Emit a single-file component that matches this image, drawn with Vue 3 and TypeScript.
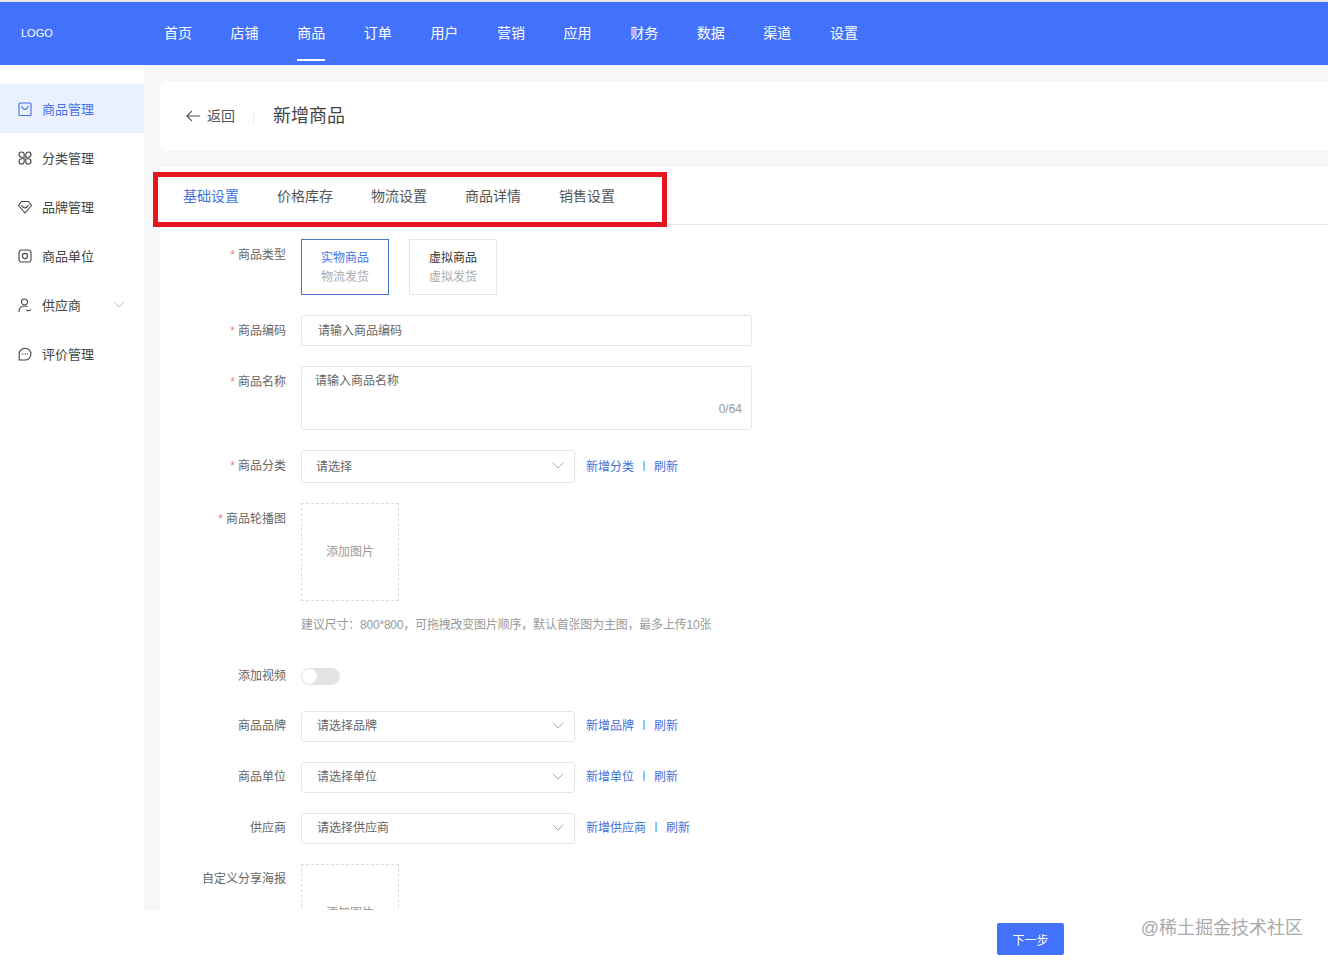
<script setup lang="ts">
interface SideItem { name: string; paths: string[]; active?: boolean; arrow?: boolean }
const navs: string[] = ['首页', '店铺', '商品', '订单', '用户', '营销', '应用', '财务', '数据', '渠道', '设置']
const tabs: string[] = ['基础设置', '价格库存', '物流设置', '商品详情', '销售设置']
const sideItems: SideItem[] = [
  { name: '商品管理', active: true, paths: ['M2 1h10a1 1 0 0 1 1 1v10.500a1 1 0 0 1-1 1H2a1 1 0 0 1-1-1V2a1 1 0 0 1 1-1z', 'M3.800 4.200c.7 2.200 1.700 3.300 3.200 3.300s2.500-1.100 3.200-3.300'] },
  { name: '分类管理', paths: ['M3.600 1a2.600 2.600 0 0 1 2.600 2.600v2.600H3.600a2.600 2.600 0 0 1 0-5.200z', 'M10.400 1a2.600 2.600 0 0 0-2.600 2.600v2.600h2.600a2.600 2.600 0 0 0 0-5.200z', 'M3.600 13a2.600 2.600 0 0 0 2.600-2.600V7.800H3.600a2.600 2.600 0 0 0 0 5.200z', 'M10.400 13a2.600 2.600 0 0 1-2.600-2.600V7.800h2.600a2.600 2.600 0 0 1 0 5.200z'] },
  { name: '品牌管理', paths: ['M3.500 1.500h7L13.500 5.500 7 13 .5 5.500z', 'M3.800 5.200c.8 1.800 1.900 2.800 3.200 2.800s2.400-1 3.200-2.800'] },
  { name: '商品单位', paths: ['M3.500 1h7A2.500 2.500 0 0 1 13 3.500v7a2.500 2.500 0 0 1-2.500 2.500h-7A2.500 2.500 0 0 1 1 10.500v-7A2.500 2.500 0 0 1 3.500 1z', 'M7 4.400a2.600 2.600 0 1 1 0 5.200 2.600 2.600 0 0 1 0-5.200z'] },
  { name: '供应商', arrow: true, paths: ['M6.500 1a3 3 0 1 1 0 6 3 3 0 0 1 0-6z', 'M1 13.500c0-3.300 2.200-5.500 5.500-5.500 1 0 1.900.2 2.600.6', 'M8.500 12.200c1 .9 2.900.9 4-.4'] },
  { name: '评价管理', paths: ['M7 1.200a5.900 5.900 0 0 1 0 11.800H1.200V7A5.800 5.800 0 0 1 7 1.200z', 'M4.300 7h.5M6.800 7h.5M9.300 7h.5'] },
]
const brandRows = [
  { label: '商品品牌', placeholder: '请选择品牌', add: '新增品牌' },
  { label: '商品单位', placeholder: '请选择单位', add: '新增单位' },
  { label: '供应商', placeholder: '请选择供应商', add: '新增供应商' },
]
</script>

<template>
  <div class="page">
    <header class="topbar">
      <div class="logo">LOGO</div>
      <nav class="nav">
        <a v-for="n in navs" :key="n" class="nav-item" :class="{ on: n === '商品' }">{{ n }}</a>
      </nav>
    </header>

    <div class="middle">
      <aside class="side">
        <div v-for="s in sideItems" :key="s.name" class="side-item" :class="{ active: s.active }">
          <svg class="side-icon" viewBox="0 0 14 14" fill="none" stroke="currentColor" stroke-width="1.100" stroke-linejoin="round" stroke-linecap="round">
            <path v-for="d in s.paths" :key="d" :d="d" />
          </svg>
          <span class="side-text">{{ s.name }}</span>
          <svg v-if="s.arrow" class="side-arrow" viewBox="0 0 10 6" fill="none" stroke="#bbb" stroke-width="1">
            <path d="M.5.5 5 5 9.500.5" />
          </svg>
        </div>
      </aside>

      <main class="main">
        <section class="title-card">
          <svg class="back-icon" viewBox="0 0 14 12" fill="none" stroke="#555" stroke-width="1.200">
            <path d="M6 .8.9 6 6 11.200M1 6h13" />
          </svg>
          <span class="back-text">返回</span>
          <i class="title-divider"></i>
          <h1 class="title">新增商品</h1>
        </section>

        <section class="form-card">
          <div class="tabs">
            <span v-for="(t, i) in tabs" :key="t" class="tab" :class="{ on: i === 0 }">{{ t }}</span>
          </div>

          <form class="form">
            <div class="row">
              <label class="label"><em>*</em>商品类型</label>
              <div class="type-group">
                <div class="type-card selected"><b>实物商品</b><span>物流发货</span></div>
                <div class="type-card"><b>虚拟商品</b><span>虚拟发货</span></div>
              </div>
            </div>

            <div class="row">
              <label class="label"><em>*</em>商品编码</label>
              <div class="input">请输入商品编码</div>
            </div>

            <div class="row">
              <label class="label"><em>*</em>商品名称</label>
              <div class="textarea">
                <span>请输入商品名称</span>
                <span class="count">0/64</span>
              </div>
            </div>

            <div class="row">
              <label class="label"><em>*</em>商品分类</label>
              <div class="select tall">
                <span>请选择</span>
                <svg class="chev" viewBox="0 0 12 7" fill="none" stroke="#aaa" stroke-width="1"><path d="M.7.7 6 6 11.300.7" /></svg>
              </div>
              <div class="links"><a>新增分类</a><i>|</i><a>刷新</a></div>
            </div>

            <div class="row">
              <label class="label"><em>*</em>商品轮播图</label>
              <div>
                <div class="upload">添加图片</div>
                <p class="hint">建议尺寸&#xFF1A;800*800&#xFF0C;可拖拽改变图片顺序&#xFF0C;默认首张图为主图&#xFF0C;最多上传10张</p>
              </div>
            </div>

            <div class="row switch-row">
              <label class="label">添加视频</label>
              <div class="switch"><i></i></div>
            </div>

            <div v-for="r in brandRows" :key="r.label" class="row brand-row">
              <label class="label">{{ r.label }}</label>
              <div class="select">
                <span>{{ r.placeholder }}</span>
                <svg class="chev" viewBox="0 0 12 7" fill="none" stroke="#aaa" stroke-width="1"><path d="M.7.7 6 6 11.300.7" /></svg>
              </div>
              <div class="links"><a>{{ r.add }}</a><i>|</i><a>刷新</a></div>
            </div>

            <div class="row brand-row">
              <label class="label">自定义分享海报</label>
              <div class="upload">添加图片</div>
            </div>
          </form>
        </section>

        <div class="annotation"></div>
      </main>
    </div>

    <footer class="footer">
      <button class="next" type="button">下一步</button>
      <span class="watermark">@稀土掘金技术社区</span>
    </footer>
  </div>
</template>

<style>
html, body { margin: 0; background: #fff; }
</style>

<style scoped>
.page {
  position: relative;
  width: 1328px;
  height: 963px;
  display: flex;
  flex-direction: column;
  overflow: hidden;
  background: #fff;
  font-family: "Liberation Sans", "Noto Sans CJK SC", sans-serif;
  font-size: 12px;
  color: #666;
}
.topbar {
  flex: none;
  height: 63px;
  border-top: 2px solid #e6e7ec;
  background: #4272fb;
  display: flex;
  align-items: center;
  color: #fff;
}
.logo { width: 164px; padding: 0 0 1px 21px; box-sizing: border-box; font-size: 11px; }
.nav { display: flex; gap: 38.6px; height: 100%; }
.nav-item {
  position: relative;
  display: flex;
  align-items: center;
  width: 28px;
  padding-bottom: 3px;
  box-sizing: border-box;
  font-size: 14px;
}
.nav-item.on::after {
  content: "";
  position: absolute;
  left: 0;
  right: 0;
  bottom: 4px;
  height: 2px;
  background: #fff;
}
.middle { flex: 1; min-height: 0; display: flex; }
.side { flex: none; width: 144px; padding-top: 19px; box-sizing: border-box; background: #fff; }
.side-item {
  height: 49px;
  display: flex;
  align-items: center;
  padding-left: 18px;
  color: #444;
  font-size: 13px;
}
.side-item.active { background: #ebf0fe; color: #4272e6; }
.side-icon { width: 14px; height: 14px; flex: none; }
.side-text { margin-left: 10px; }
.side-arrow { width: 10px; height: 6px; margin-left: 33px; }
.main {
  position: relative;
  flex: 1;
  min-width: 0;
  display: flex;
  flex-direction: column;
  gap: 16px;
  padding: 16px 0 0 16px;
  background: #f5f7f8;
}
.title-card {
  flex: none;
  height: 70px;
  box-sizing: border-box;
  display: flex;
  align-items: center;
  padding-left: 26px;
  background: #fff;
  border-radius: 6px 0 0 6px;
}
.back-icon { width: 14px; height: 12px; }
.back-text { margin: -2px 0 0 7px; font-size: 14px; color: #555; }
.title-divider { width: 1px; height: 15px; margin: 0 19px 0 18px; background: #eee; }
.title { margin: -4px 0 0; font-size: 18px; font-weight: 400; color: #444; }
.form-card { flex: 1; min-height: 0; overflow: hidden; background: #fff; }
.tabs {
  height: 58px;
  box-sizing: border-box;
  display: flex;
  align-items: center;
  gap: 38px;
  padding: 0 0 2px 23px;
  border-bottom: 1px solid #e8e8e8;
}
.tab { font-size: 14px; color: #555; }
.tab.on { color: #4272e6; }
.form { padding-top: 14px; }
.row { display: flex; align-items: flex-start; margin-bottom: 20px; }
.label {
  flex: none;
  width: 125px;
  margin-right: 15px;
  padding: 1px 0 0 1px;
  line-height: 30px;
  text-align: right;
  color: #666;
}
.brand-row .label { padding-top: 0; padding-bottom: 1px; }
.label em { margin-right: 3px; font-style: normal; color: #ef7f8c; }
.type-group { display: flex; gap: 20px; }
.type-card {
  width: 88px;
  height: 56px;
  box-sizing: border-box;
  display: flex;
  flex-direction: column;
  align-items: center;
  justify-content: center;
  padding-top: 2px;
  border: 1px solid #e6e6e6;
  line-height: 19px;
}
.type-card b { font-weight: 400; color: #333; }
.type-card span { color: #aaa; }
.type-card.selected { border-color: #4a74c9; }
.type-card.selected b { color: #4272e6; }
.input {
  width: 451px;
  height: 31px;
  box-sizing: border-box;
  padding-left: 16px;
  line-height: 31px;
  border: 1px solid #e6e6e6;
  border-radius: 3px;
  color: #666;
}
.textarea {
  position: relative;
  width: 451px;
  height: 64px;
  box-sizing: border-box;
  padding: 4px 13px;
  line-height: 20px;
  border: 1px solid #e6e6e6;
  border-radius: 3px;
  color: #666;
}
.count { position: absolute; right: 9px; bottom: 10px; color: #999; }
.select {
  flex: none;
  width: 274px;
  height: 31px;
  box-sizing: border-box;
  display: flex;
  align-items: center;
  justify-content: space-between;
  padding: 0 10px 2px 15px;
  border: 1px solid #e6e6e6;
  border-radius: 3px;
  color: #666;
}
.brand-row .select { padding-bottom: 4px; }
.brand-row .chev { margin-top: 2px; }
.select.tall { height: 33px; padding-left: 14px; }
.chev { width: 12px; height: 7px; }
.links { display: flex; align-items: center; height: 30px; margin-left: 11px; color: #4272e0; }
.brand-row .links { height: 26px; }
.links i { width: 20px; text-align: center; font-style: normal; font-size: 11px; }
.upload {
  width: 98px;
  height: 98px;
  box-sizing: border-box;
  display: flex;
  align-items: center;
  justify-content: center;
  padding-bottom: 3px;
  border: 1px dashed #ddd;
  color: #999;
}
.hint { margin: 14px 0 5px; line-height: 20px; letter-spacing: -0.2px; color: #999; white-space: nowrap; }
.switch-row { height: 31px; }
.switch {
  position: relative;
  width: 39px;
  height: 17px;
  margin-top: 8px;
  border-radius: 9px;
  background: #e3e3e3;
}
.switch i {
  position: absolute;
  left: 1px;
  top: 1px;
  width: 15px;
  height: 15px;
  border-radius: 50%;
  background: #fff;
}
.annotation {
  position: absolute;
  left: 9px;
  top: 107px;
  width: 514px;
  height: 55px;
  box-sizing: border-box;
  border: 5px solid #e5141f;
  pointer-events: none;
}
.footer {
  position: relative;
  flex: none;
  height: 53px;
  box-sizing: border-box;
  padding: 13px 264px 0 0;
  display: flex;
  justify-content: flex-end;
  align-items: flex-start;
  background: #fff;
}
.next {
  width: 67px;
  height: 32px;
  padding: 0;
  border: 0;
  border-radius: 2px;
  background: #4272fb;
  color: #fff;
  font: inherit;
}
.watermark {
  position: absolute;
  right: 25px;
  top: 4px;
  font-size: 18px;
  line-height: 28px;
  color: #aaa;
  white-space: nowrap;
}
</style>
